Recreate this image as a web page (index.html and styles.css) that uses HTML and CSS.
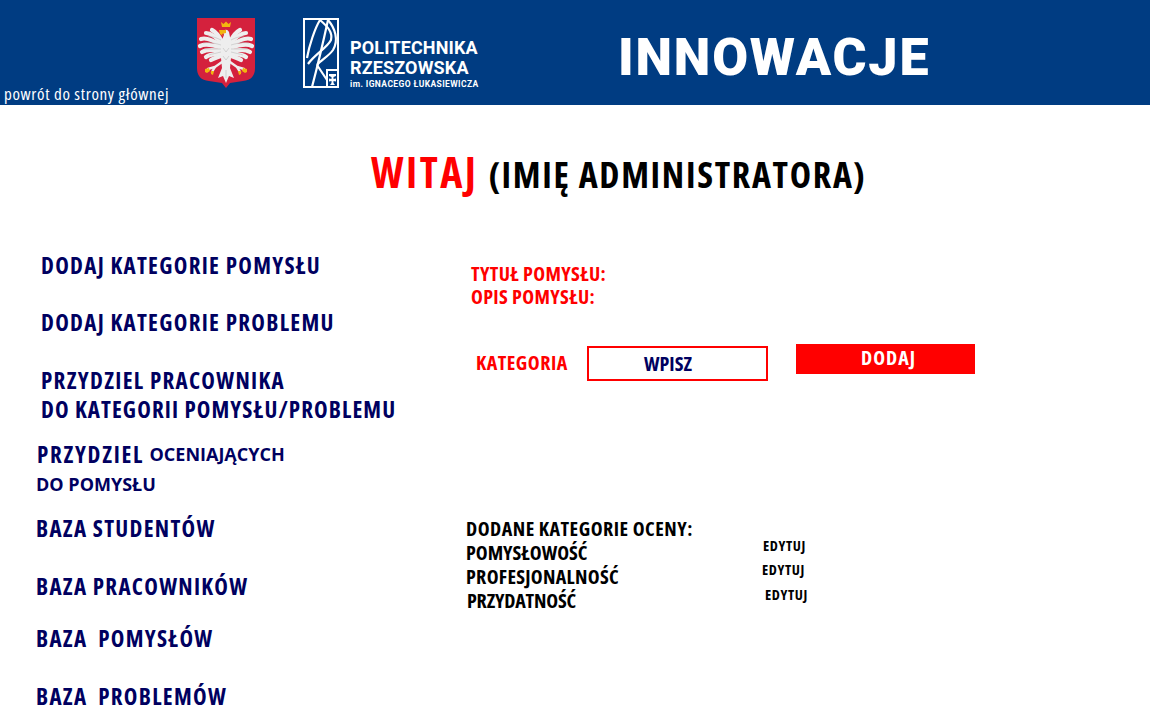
FILE: index.html
```html
<!DOCTYPE html>
<html lang="pl">
<head>
    <meta charset="UTF-8">
    <meta name="viewport" content="width=device-width, initial-scale=1.0">
    <title>Innowacje</title>
    <link rel="stylesheet" href="styles.css">
</head>
<body>
    <div class="header">
        <a class="back-link" href="#">powrót do strony głównej</a>
        <svg class="crest" viewBox="0 0 58 70" aria-label="Godło Polski">
            <path fill="#d4213d" d="M0 0H58V50Q58 62 46 63L33 65L29 70L25 65L12 63Q0 62 0 50Z"/>
            <g fill="none" stroke="#eeeeee" stroke-width="4.200" stroke-linecap="round">
                <path d="M25 24C22 18 19 14 15 12"/>
                <path d="M25 26C20 20 14 15 9 15"/>
                <path d="M25 28C19 24 10 19 4 21"/>
                <path d="M25 30C19 28 9 25 3 28"/>
                <path d="M25 33C19 32 10 31 5 34"/>
                <path d="M25 35C20 36 13 36 9 39"/>
                <path d="M26 37C22 39 17 40 14 42"/>
                <path d="M33 24C36 18 39 14 43 12"/>
                <path d="M33 26C38 20 44 15 49 15"/>
                <path d="M33 28C39 24 48 19 54 21"/>
                <path d="M33 30C39 28 49 25 55 28"/>
                <path d="M33 33C39 32 48 31 53 34"/>
                <path d="M33 35C38 36 45 36 49 39"/>
                <path d="M32 37C36 39 41 40 44 42"/>
            </g>
            <path fill="#eeeeee" d="M26 13Q30 10 32 14L34 24V40L33 50L37 60L32 58L29 65L26 58L21 60L25 50L24 40V24L27 17Z"/>
            <g fill="none" stroke="#eeeeee" stroke-width="2.400" stroke-linecap="round">
                <path d="M25 44L18 49L11 51"/>
                <path d="M33 44L40 49L47 51"/>
                <path d="M18 49L15 54M40 49L43 54"/>
            </g>
            <g fill="none" stroke="#bdbdbd" stroke-width="0.600">
                <path d="M24 22C20 20 15 18 11 19M24 27C18 25 11 24 6 25M24 31C18 31 11 31 7 31M24 34C20 35 15 36 12 37"/>
                <path d="M34 22C38 20 43 18 47 19M34 27C40 25 47 24 52 25M34 31C40 31 47 31 51 31M34 34C38 35 43 36 46 37"/>
                <path d="M26 30L29 34L32 30M26 38L29 42L32 38M29 52V60"/>
            </g>
            <path fill="#f2b50f" d="M24 4L26.500 6L29 3.500L31.500 6L34 4L33 9H25Z"/>
            <path fill="#f2b50f" d="M22 12H29V15L25 16L26 18L23 16Z"/>
            <path fill="#f2b50f" d="M8 51L12 50L13 53L10 55L8 54ZM50 51L46 50L45 53L48 55L50 54ZM14 53L17 53L16 57L14 56ZM44 53L41 53L42 57L44 56Z"/>
        </svg>
        <svg class="pr-logo" viewBox="0 0 36 70" aria-label="Logo PRz">
            <rect x="1" y="1" width="34" height="68" fill="none" stroke="#fff" stroke-width="2"/>
            <g fill="none" stroke="#fff" stroke-width="2.200">
                <path d="M4 40C6 28 12 10 17 2"/>
                <path d="M17 2C24 8 30 14 28 22C24 30 12 36 5 46"/>
                <path d="M9 69C14 50 20 25 25 2"/>
                <path d="M25 2C32 10 36 22 30 32C26 38 18 42 14 47"/>
                <path d="M14 47L24 62"/>
            </g>
            <path fill="#fff" d="M23 51H35V53H25V69H23Z"/>
            <path fill="#fff" d="M26 56H33V58L30.500 59V61L33 60.500V63.500L30.500 63V65L32 67H27L28.500 65V63L26 63.500V60.500L28.500 61V59L26 58Z"/>
        </svg>
        <div class="brand">
            <div class="brand-name">POLITECHNIKA</div>
            <div class="brand-name">RZESZOWSKA</div>
            <div class="brand-sub">im. IGNACEGO ŁUKASIEWICZA</div>
        </div>
        <div class="site-title">INNOWACJE</div>
    </div>

    <h1 class="welcome"><span class="welcome-red">WITAJ</span> (IMIĘ ADMINISTRATORA)</h1>

    <div class="content">
        <div class="side-menu">
            <a class="menu-item item-1" href="#">DODAJ KATEGORIE POMYSŁU</a>
            <a class="menu-item item-2" href="#">DODAJ KATEGORIE PROBLEMU</a>
            <a class="menu-item item-3" href="#">PRZYDZIEL PRACOWNIKA<br><span class="menu-tight">DO KATEGORII POMYSŁU/PROBLEMU</span></a>
            <a class="menu-item item-4" href="#"><span class="menu-wide">PRZYDZIEL</span> <span class="menu-small menu-small-first">OCENIAJĄCYCH</span><br><span class="menu-small menu-small-second">DO POMYSŁU</span></a>
            <a class="menu-item item-5" href="#">BAZA STUDENTÓW</a>
            <a class="menu-item item-6" href="#">BAZA PRACOWNIKÓW</a>
            <a class="menu-item item-7" href="#">BAZA&nbsp; POMYSŁÓW</a>
            <a class="menu-item item-8" href="#">BAZA&nbsp; PROBLEMÓW</a>
        </div>

        <div class="main">
            <div class="field-label">TYTUŁ POMYSŁU:</div>
            <div class="field-label">OPIS POMYSŁU:</div>

            <div class="category-row">
                <span class="category-label">KATEGORIA</span>
                <div class="category-input">WPISZ</div>
                <button class="add-button">DODAJ</button>
            </div>

            <div class="added">
                <div class="added-title">DODANE KATEGORIE OCENY:</div>
                <div class="added-row row-1"><span>POMYSŁOWOŚĆ</span><a class="edit-link" href="#">EDYTUJ</a></div>
                <div class="added-row row-2"><span>PROFESJONALNOŚĆ</span><a class="edit-link" href="#">EDYTUJ</a></div>
                <div class="added-row row-3"><span>PRZYDATNOŚĆ</span><a class="edit-link" href="#">EDYTUJ</a></div>
            </div>
        </div>
    </div>
</body>
</html>
```

FILE: styles.css
```css
body {
    margin: 0;
    height: 719px;
    overflow: hidden;
    background: white;
    font-family: "Open Sans", "Liberation Sans", sans-serif;
    font-stretch: 75%;
    font-weight: 700;
}

a {
    color: inherit;
    text-decoration: none;
}

.header {
    display: flex;
    align-items: flex-start;
    height: 105px;
    background-color: #003c82;
    color: white;
}

.back-link {
    width: 193px;
    margin: 82px 0 0 4px;
    font-weight: normal;
    font-size: 17px;
    letter-spacing: 0.65px;
    white-space: nowrap;
}

.crest {
    width: 58px;
    height: 70px;
    margin-top: 18px;
}

.pr-logo {
    width: 36px;
    height: 70px;
    margin: 18px 0 0 48px;
}

.brand {
    margin: 38px 0 0 11px;
    width: 268px;
}

.brand-name {
    font-family: "Roboto", sans-serif;
    font-stretch: 100%;
    font-weight: 700;
    font-size: 18px;
    line-height: 20px;
    letter-spacing: 0.15px;
}

.brand-sub {
    font-family: "Roboto", sans-serif;
    font-stretch: 100%;
    font-weight: 700;
    font-size: 8.500px;
    line-height: 13px;
    letter-spacing: 0.4px;
}

.site-title {
    font-family: "Roboto", sans-serif;
    font-stretch: 100%;
    font-weight: 900;
    font-size: 52px;
    line-height: 58px;
    margin-top: 29px;
    letter-spacing: 1.800px;
}

.welcome {
    margin: 46px 0 0 371px;
    font-size: 36px;
    line-height: 48px;
    font-weight: 700;
    letter-spacing: 1.7px;
    color: black;
}

.welcome-red {
    margin-right: 2px;
    color: #ff0000;
    font-size: 42px;
    line-height: 1;
    letter-spacing: 2.500px;
}

.content {
    display: flex;
    margin-top: 52px;
}

.side-menu {
    width: 466px;
    flex-shrink: 0;
    display: flex;
    flex-direction: column;
    color: #000060;
    font-size: 23px;
    line-height: 29px;
    letter-spacing: 1.3px;
}

.menu-item {
    white-space: nowrap;
    margin-left: 36px;
}

.menu-tight {
    letter-spacing: 1.1px;
}

.menu-wide {
    letter-spacing: 1.7px;
}

.item-1, .item-2, .item-3 {
    margin-left: 41px;
}

.item-2 {
    margin-top: 28px;
}

.item-3 {
    margin-top: 29px;
}

.item-4 {
    margin-top: 16px;
    margin-left: 37px;
    line-height: 28px;
}

.menu-small {
    font-family: "Open Sans", sans-serif;
    font-stretch: 100%;
    font-weight: 700;
    font-size: 18px;
    line-height: 1;
    letter-spacing: 0;
}

.menu-small-first {
    vertical-align: 2px;
}

.menu-small-second {
    margin-left: -1px;
}

.item-5 {
    margin-top: 18px;
}

.item-6 {
    margin-top: 29px;
}

.item-7 {
    margin-top: 23px;
}

.item-8 {
    margin-top: 29px;
}

.main {
    flex-grow: 1;
}

.field-label {
    margin-left: 5px;
    color: #ff0000;
    font-size: 20px;
    line-height: 23px;
    letter-spacing: 0.35px;
}

.field-label:first-child {
    margin-top: 11px;
}

.category-row {
    display: flex;
    align-items: flex-start;
    margin-top: 36px;
}

.category-label {
    width: 111px;
    margin: 7px 0 0 10px;
    color: #ff0000;
    font-size: 20px;
    line-height: 24px;
    letter-spacing: 0.5px;
}

.category-input {
    box-sizing: border-box;
    width: 181px;
    height: 35px;
    margin-top: 2px;
    padding-right: 19px;
    border: 2px solid #ff0000;
    color: #000060;
    font-size: 20px;
    line-height: 31px;
    text-align: center;
}

.add-button {
    width: 179px;
    height: 30px;
    margin-left: 28px;
    padding: 0 0 6px 6px;
    border: none;
    background-color: #ff0000;
    color: white;
    font-family: inherit;
    font-stretch: inherit;
    font-weight: 700;
    font-size: 20px;
    letter-spacing: 1px;
}

.added {
    margin-top: 136px;
    color: black;
    font-size: 20px;
    line-height: 24px;
    letter-spacing: 0.5px;
}

.added-row {
    display: flex;
}

.added-row span {
    width: 297px;
}

.row-1 span {
    letter-spacing: 0;
}

.row-2 span {
    letter-spacing: 0.3px;
}

.row-2 .edit-link {
    margin-left: -1px;
}

.row-3 {
    margin-left: 1px;
}

.row-3 span {
    letter-spacing: -0.2px;
}

.row-3 .edit-link {
    margin-top: -2px;
    margin-left: 1px;
}

.edit-link {
    margin-top: -3px;
    font-size: 14.500px;
    line-height: 16px;
    letter-spacing: 0.6px;
}
```
